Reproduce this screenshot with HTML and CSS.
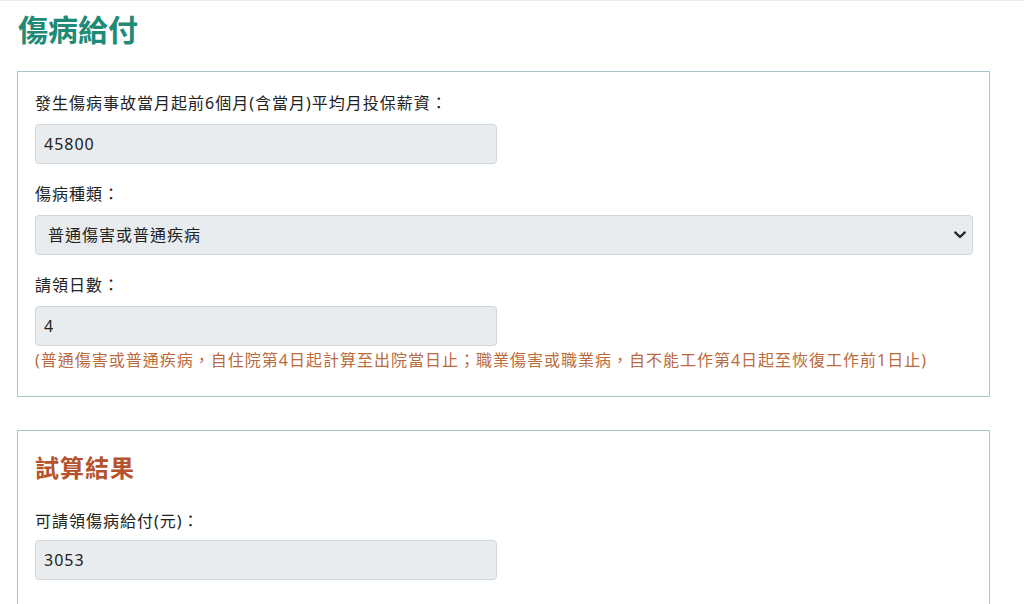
FILE: index.html
```html
<!DOCTYPE html>
<html lang="zh-Hant">
<head>
<meta charset="utf-8">
<title>傷病給付</title>
<link rel="stylesheet" href="styles.css">
</head>
<body>
<main class="page">
  <h1 class="page-title">傷病給付</h1>

  <section class="card">
    <div class="field">
      <label class="field-label" for="salary">發生傷病事故當月起前6個月(含當月)平均月投保薪資：</label>
      <input class="field-input" id="salary" type="text" value="45800" readonly>
    </div>
    <div class="field">
      <label class="field-label" for="kind">傷病種類：</label>
      <div class="select-wrap">
        <select class="field-select" id="kind">
          <option>普通傷害或普通疾病</option>
          <option>職業傷害或職業病</option>
        </select>
        <svg class="select-arrow" width="12" height="8" viewBox="0 0 12 8" aria-hidden="true">
          <path d="M1.2 1.4 L6 6 L10.8 1.4" fill="none" stroke="#222" stroke-width="2.2" stroke-linecap="round" stroke-linejoin="round"/>
        </svg>
      </div>
    </div>
    <div class="field field-last">
      <label class="field-label" for="days">請領日數：</label>
      <input class="field-input" id="days" type="text" value="4" readonly>
      <p class="field-note">(普通傷害或普通疾病，自住院第4日起計算至出院當日止；職業傷害或職業病，自不能工作第4日起至恢復工作前1日止)</p>
    </div>
  </section>

  <section class="card card-result">
    <h2 class="result-title">試算結果</h2>
    <div class="field">
      <label class="field-label field-label-tight" for="result">可請領傷病給付(元)：</label>
      <input class="field-input" id="result" type="text" value="3053" readonly>
    </div>
  </section>
</main>
</body>
</html>
```

FILE: styles.css
```css
* {
  box-sizing: border-box;
}

html, body {
  margin: 0;
  padding: 0;
  background: #ffffff;
}

body {
  font-family: "Noto Sans", "Noto Sans CJK TC", sans-serif;
  font-size: 16px;
  color: #222222;
  letter-spacing: 1px;
  border-top: 1px solid #ececec;
}

.page {
  padding: 11px 34px 0 17px;
}

.page-title {
  margin: 0 0 23px 1px;
  font-size: 30px;
  line-height: 36px;
  font-weight: 700;
  color: #1f8b77;
  letter-spacing: 0;
}

.card {
  width: 973px;
  border: 1px solid #a9c7cb;
  padding: 19px 16px 24px 17px;
  background: #ffffff;
}

.card-result {
  margin-top: 33px;
  padding-bottom: 40px;
}

.field {
  margin-bottom: 18px;
}

.field-last {
  margin-bottom: 0;
}

.field-label {
  display: block;
  line-height: 24px;
  margin-bottom: 9px;
}

.field-label-tight {
  margin-bottom: 7px;
}

.field-input,
.field-select {
  display: block;
  height: 40px;
  font-family: inherit;
  font-size: 16px;
  letter-spacing: 1px;
  color: #222222;
  background: #e9ecef;
  border: 1px solid #cfd5db;
  border-radius: 4px;
  outline: none;
}

.field-input {
  width: 462px;
  padding: 0 8px;
}

.select-wrap {
  position: relative;
  width: 938px;
}

.field-select {
  width: 100%;
  padding: 0 40px 0 12px;
  appearance: none;
  -webkit-appearance: none;
}

.select-arrow {
  position: absolute;
  right: 7px;
  top: 16px;
}

.field-note {
  margin: 2px 0 0 0;
  line-height: 24px;
  color: #bb6a3d;
}

.result-title {
  margin: 0 0 23px 0;
  font-size: 24px;
  line-height: 36px;
  font-weight: 700;
  color: #b5532c;
}
```
